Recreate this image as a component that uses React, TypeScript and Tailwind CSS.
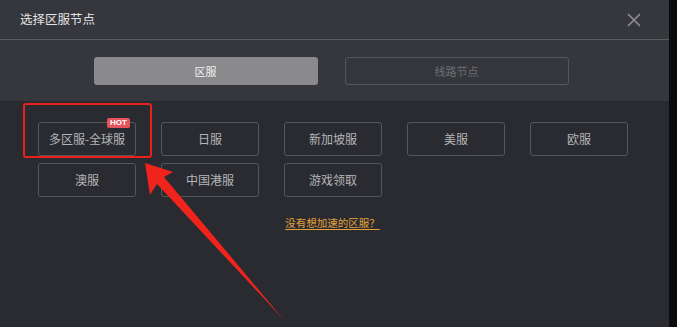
const REGIONS = ["多区服-全球服", "日服", "新加坡服", "美服", "欧服", "澳服", "中国港服", "游戏领取"];

export default function App() {
  return (
    <div className="relative flex w-[677px] h-[327px] overflow-hidden bg-[#0b0b0d] font-['Noto_Sans_CJK_SC',sans-serif]">
      <div className="flex flex-col w-[669px] h-full">
        {/* Header */}
        <div className="flex items-center justify-between h-[40px] pl-[20px] pr-[28px] bg-[#36373c] border-b border-[#5b5c60]">
          <span className="text-[12.5px] text-[#e4e4e6] leading-none">选择区服节点</span>
          <svg width="14" height="14" viewBox="0 0 14 14" className="text-[#8d8e92]">
            <path d="M1 1L13 13M13 1L1 13" stroke="currentColor" strokeWidth="1.6" />
          </svg>
        </div>

        {/* Tabs */}
        <div className="flex justify-center gap-[27px] h-[61px] pt-[17px] pr-[7px] bg-[#36373c]">
          <div className="flex items-center justify-center w-[224px] h-[28px] rounded-[3px] bg-[#8a8a8c] text-[11px] text-[#f2f2f2]">
            区服
          </div>
          <div className="flex items-center justify-center w-[224px] h-[28px] rounded-[3px] border border-[#55565b] text-[11px] text-[#6e6f73]">
            线路节点
          </div>
        </div>

        {/* Region grid */}
        <div className="flex-1 flex flex-col bg-[#2a2b30] pt-[21px] pl-[38px]">
          <div className="grid grid-cols-[repeat(5,98px)] gap-x-[25px] gap-y-[7px]">
            {REGIONS.map((name, i) => (
              <div
                key={name}
                className="relative flex items-center justify-center h-[34px] rounded-[3px] border border-[#55575b] text-[12px] text-[#b5b6b9]"
              >
                {name}
                {i === 0 && (
                  <span className="absolute -top-[5px] right-[5px] flex items-center justify-center w-[23px] h-[10px] rounded-[2px] bg-[#e8525a] text-[8px] font-bold text-white leading-none font-['Liberation_Sans',sans-serif]">
                    HOT
                  </span>
                )}
              </div>
            ))}
          </div>
          <div className="mt-[18px] pr-[38px] flex justify-center">
            <span className="text-[10.5px] text-[#e3a23b] underline underline-offset-2 mr-[4px]">没有想加速的区服？</span>
          </div>
        </div>
      </div>

      {/* Annotation overlay */}
      <div className="absolute left-[23px] top-[103px] w-[129px] h-[55px] rounded-[3px] border-[2.5px] border-[#e8211d]" />
      <svg className="absolute left-0 top-0" width="677" height="327" viewBox="0 0 677 327">
        <polygon points="145,163 173,172 164,177 284,320 157,184 150,195" fill="#f0231d" />
      </svg>
    </div>
  );
}
